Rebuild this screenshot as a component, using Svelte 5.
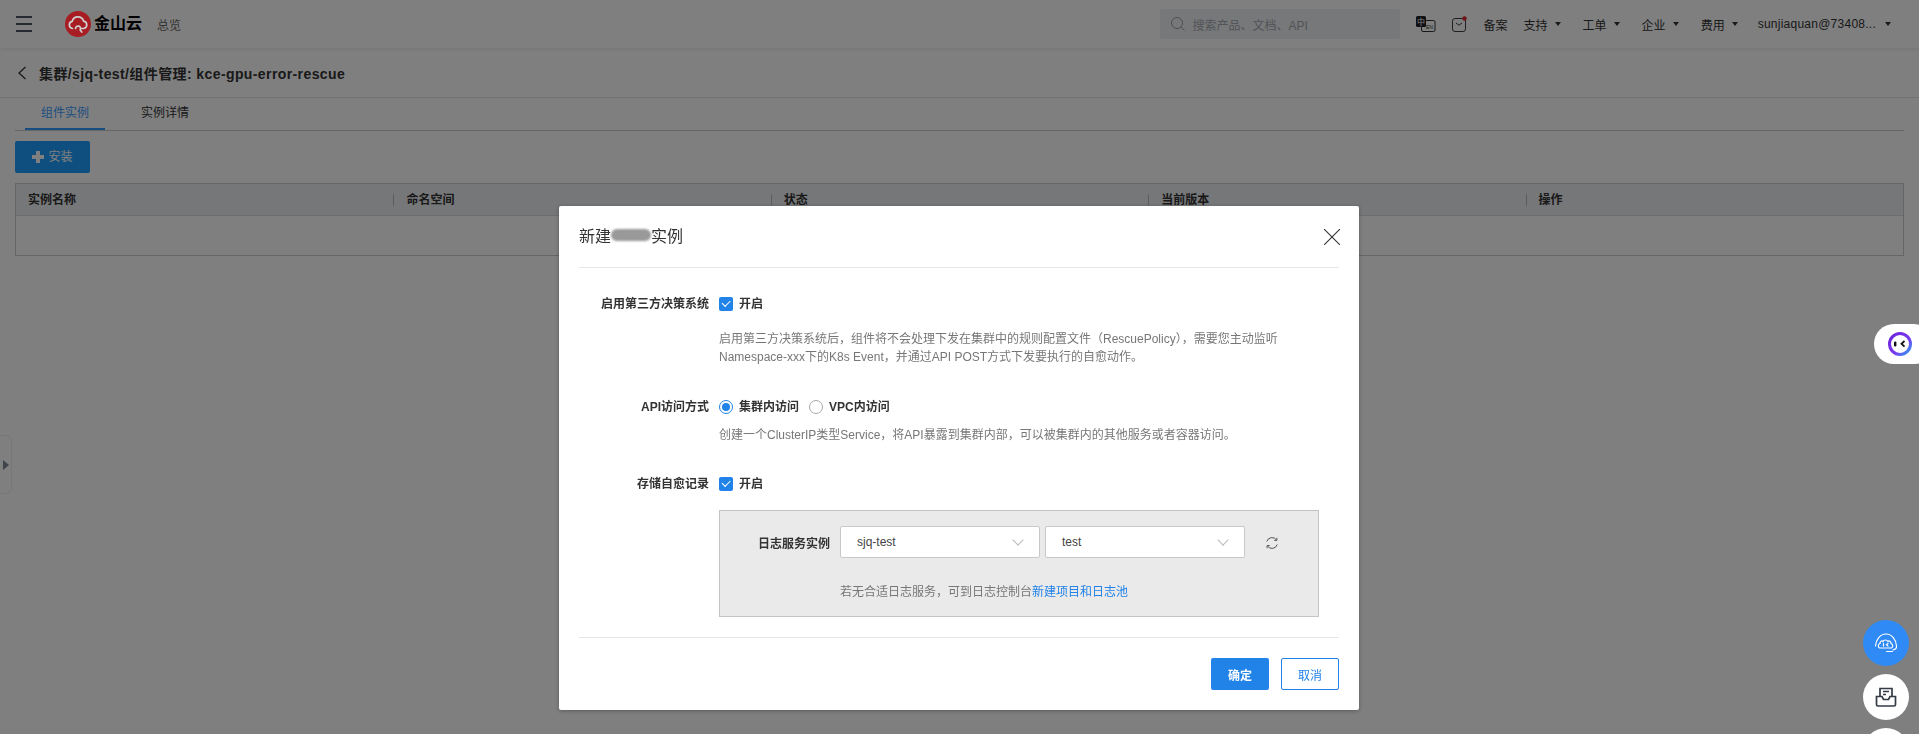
<script lang="ts">
  const columns = ['实例名称', '命名空间', '状态', '当前版本', '操作'];
  const navItems = ['支持', '工单', '企业', '费用'];
</script>

<div class="page">
  <header class="topbar">
    <div class="menu-icon"><span></span><span></span><span></span></div>
    <svg class="logo" viewBox="0 0 26 26" width="26" height="26">
      <circle cx="13" cy="13" r="13" fill="#a81d23" />
      <path d="M7.500 17.500a3.600 3.600 0 0 1-.3-7.100 5.900 5.900 0 0 1 11.400-.2 3.700 3.700 0 0 1 .1 7.300h-3.200M10.600 17.500a2.500 2.500 0 1 1 4.600 1.400l1.600 2.100" fill="none" stroke="#cfcfcf" stroke-width="1.700" stroke-linecap="round" />
    </svg>
    <span class="logo-text">金山云</span>
    <span class="overview">总览</span>
    <div class="search">
      <svg viewBox="0 0 16 16" width="16" height="16" fill="none" stroke="#9a9ea4" stroke-width="1"><circle cx="7" cy="7" r="5.500" /><path d="M11 11l3.500 3.500" /></svg>
      <span>搜索产品、文档、API</span>
    </div>
    <svg class="lang" viewBox="0 0 20 16" width="20" height="16">
      <rect x="5.500" y="4.500" width="13.500" height="11" rx="1.500" fill="#fff" stroke="#333" />
      <rect x="0" y="0" width="10" height="11" rx="1.500" fill="#1d2026" />
      <text x="1" y="8.500" font-size="8" fill="#fff">中</text>
      <text x="10" y="13" font-size="5" fill="#333">EN</text>
    </svg>
    <svg class="msg" viewBox="0 0 16 16" width="16" height="16" fill="none" stroke="#3a3f46">
      <rect x="0.500" y="2.500" width="13" height="13" rx="2.500" />
      <path d="M4 7l3 2.200 3-2.200" />
      <circle cx="12.500" cy="2.500" r="2.200" fill="#e0242c" stroke="none" />
    </svg>
    <span class="nav-item record">备案</span>
    {#each navItems as item}
      <span class="nav-item">{item}<i class="caret"></i></span>
    {/each}
    <span class="nav-item user">sunjiaquan@73408...<i class="caret"></i></span>
  </header>

  <div class="title-row">
    <svg viewBox="0 0 10 16" width="10" height="16" fill="none" stroke="#333" stroke-width="1.300"><path d="M8.500 2L2 8l6.500 6" /></svg>
    <h1>集群/sjq-test/组件管理: kce-gpu-error-rescue</h1>
  </div>

  <div class="tabs">
    <span class="tab active">组件实例</span>
    <span class="tab">实例详情</span>
  </div>

  <div class="content">
    <button type="button" class="install"><i class="plus"></i>安装</button>
    <div class="table">
      <div class="thead">
        {#each columns as col}
          <div class="th">{col}</div>
        {/each}
      </div>
      <div class="tbody"></div>
    </div>
  </div>

  <div class="side-toggle"><i></i></div>
</div>

<div class="mask"></div>

<div class="assist">
  <svg viewBox="0 0 24 24" width="24" height="24">
    <defs>
      <linearGradient id="ring" x1="0" y1="0" x2="1" y2="1">
        <stop offset="0" stop-color="#6a22d8" />
        <stop offset="0.6" stop-color="#7b3cf0" />
        <stop offset="1" stop-color="#2aa4ee" />
      </linearGradient>
    </defs>
    <circle cx="12" cy="12" r="10.500" fill="none" stroke="url(#ring)" stroke-width="3" />
    <rect x="6" y="9.500" width="2.400" height="5" rx="1" fill="#111" />
    <path d="M16.500 9l-3 2.800 3 2.800" fill="none" stroke="#111" stroke-width="1.800" />
  </svg>
</div>

<div class="float-btn blue">
  <svg viewBox="0 0 24 20" width="24" height="20" fill="none" stroke="#fff" stroke-width="1.200" stroke-linecap="round">
    <path d="M1.500 13C2 6.500 6 1 12 1s10 5.500 10.500 12c.2 2-1.200 3.500-3.500 4" />
    <path d="M5.500 15c-1.800-1-1.500-4.200.5-4.500-.2-2.200 2-3.200 3-2 .8-2 4-2 5 0 1.200-1.200 3.200-.2 3 2 2 .3 2.300 3.500.5 4.500z" />
    <path d="M9.500 10.500v2.500M14 10.500l-1.500 1.300 1.500 1.300" />
    <path d="M12.500 18.500h6" />
  </svg>
</div>
<div class="float-btn white inbox">
  <svg viewBox="0 0 24 24" width="24" height="24" fill="none" stroke="#333b47" stroke-width="1.700">
    <path d="M6 11V3.500h12V11" />
    <path d="M9 6.500h6M9 9.500h3" />
    <path d="M2.500 11.500h5.500l1.500 3h5l1.500-3h5.500v8a1.500 1.500 0 0 1-1.500 1.500H4a1.500 1.500 0 0 1-1.500-1.500z" />
  </svg>
</div>
<div class="float-btn white peek"></div>

<div class="modal">
  <div class="modal-head">
    <h2>新建<span class="blur"></span>实例</h2>
    <svg class="close" viewBox="0 0 16 16" width="16" height="16" fill="none" stroke="#333" stroke-width="1.100"><path d="M0 0l16 16M16 0L0 16" /></svg>
  </div>

  <div class="modal-body">
    <div class="row row-one">
      <div class="label">启用第三方决策系统</div>
      <div class="control">
        <span class="opt"><i class="check"></i>开启</span>
      </div>
    </div>
    <p class="desc d-one">
      启用第三方决策系统后，组件将不会处理下发在集群中的规则配置文件（RescuePolicy），需要您主动监听<br />
      Namespace-xxx下的K8s Event，并通过API POST方式下发要执行的自愈动作。
    </p>

    <div class="row row-two">
      <div class="label">API访问方式</div>
      <div class="control">
        <span class="opt"><i class="radio on"></i>集群内访问</span>
        <span class="opt"><i class="radio"></i>VPC内访问</span>
      </div>
    </div>
    <p class="desc d-two">创建一个ClusterIP类型Service，将API暴露到集群内部，可以被集群内的其他服务或者容器访问。</p>

    <div class="row row-three">
      <div class="label">存储自愈记录</div>
      <div class="control">
        <span class="opt"><i class="check"></i>开启</span>
      </div>
    </div>

    <div class="log-box">
      <div class="log-row">
        <div class="log-label">日志服务实例</div>
        <div class="select first">sjq-test<i class="chev"></i></div>
        <div class="select">test<i class="chev"></i></div>
        <svg class="refresh" viewBox="0 0 14 14" width="14" height="14" fill="none" stroke="#555" stroke-width="1">
          <path d="M1.800 5.500A5.400 5.400 0 0 1 11.500 4M12.200 8.500A5.400 5.400 0 0 1 2.500 10" />
          <path d="M11.900 1.800v2.600H9.300M2.100 12.200V9.600h2.600" />
        </svg>
      </div>
      <div class="hint">若无合适日志服务，可到日志控制台<span class="link">新建项目和日志池</span></div>
    </div>
  </div>

  <div class="modal-foot">
    <button type="button" class="btn primary">确定</button>
    <button type="button" class="btn ghost">取消</button>
  </div>
</div>

<style>
  :global(body) {
    margin: 0;
    overflow: hidden;
    background: #fff;
    font-family: "Liberation Sans", "Noto Sans CJK SC", sans-serif;
    font-size: 12px;
    color: #333;
  }

  .page {
    width: 1919px;
    height: 734px;
    overflow: hidden;
    background: #fff;
  }

  .topbar {
    height: 48px;
    display: flex;
    align-items: center;
    background: #fff;
    box-shadow: 0 1px 4px rgba(0, 0, 0, 0.1);
    padding: 0 28px 0 16px;
    box-sizing: border-box;
  }

  .menu-icon {
    width: 16px;
    display: flex;
    flex-direction: column;
    gap: 5px;
  }

  .menu-icon span {
    height: 2px;
    background: #4f5561;
  }

  /* the logo keeps more colour under the mask than plain 50% black would give */
  .logo {
    margin-left: 33px;
    position: relative;
    z-index: 2;
  }

  .logo-text {
    margin-left: 3px;
    font-size: 16px;
    line-height: 24px;
    font-weight: 700;
    color: #000;
    width: 48px;
    white-space: nowrap;
  }

  .overview {
    margin-left: 15px;
    color: #666;
  }

  .search {
    margin-left: auto;
    width: 240px;
    height: 30px;
    border-radius: 3px;
    background: #eef0f3;
    display: flex;
    align-items: center;
    gap: 7px;
    padding-left: 10px;
    box-sizing: border-box;
    color: #a4a8ae;
  }

  .search svg {
    flex: none;
  }

  .lang,
  .msg {
    margin-left: 16px;
    flex: none;
  }

  .nav-item {
    display: inline-flex;
    align-items: center;
    margin-left: 22px;
    white-space: nowrap;
    color: #333;
    flex: none;
  }

  .nav-item.record {
    margin: 0 -6px 0 16px;
  }

  .nav-item.user {
    margin-left: 20px;
    letter-spacing: 0.250px;
  }

  .caret {
    display: inline-block;
    margin-left: 7px;
    border-top: 4px solid #333;
    border-left: 3.500px solid transparent;
    border-right: 3.500px solid transparent;
  }

  .nav-item.user .caret {
    margin-left: 9px;
  }

  .title-row {
    height: 49px;
    display: flex;
    align-items: center;
    padding-left: 17px;
    gap: 12px;
    border-bottom: 1px solid #e4e4e4;
  }

  h1 {
    margin: 0;
    font-size: 14px;
    font-weight: 700;
    color: #333;
    letter-spacing: 0.400px;
  }

  .tabs {
    height: 32px;
    margin: 0 15px;
    padding-left: 10px;
    display: flex;
    border-bottom: 1px solid #ccc;
  }

  .tab {
    width: 80px;
    height: 32px;
    text-align: center;
    line-height: 30px;
    margin-right: 20px;
    box-sizing: border-box;
  }

  .tab.active {
    color: #389dff;
    border-bottom: 2px solid #2f9cff;
  }

  .content {
    padding: 10px 15px 0;
  }

  .install {
    width: 75px;
    height: 32px;
    border: 0;
    border-radius: 2px;
    background: #1f9eff;
    color: #fff;
    font: inherit;
    line-height: 30px;
    display: flex;
    align-items: center;
    justify-content: center;
    padding: 0 0 1px;
    gap: 4px;
  }

  .plus {
    width: 12px;
    height: 12px;
    background:
      linear-gradient(#fff, #fff) center / 12px 4px no-repeat,
      linear-gradient(#fff, #fff) center / 4px 12px no-repeat;
  }

  .table {
    margin-top: 10px;
    height: 73px;
    width: 1889px;
    border: 1px solid #ccc;
    box-sizing: border-box;
  }

  .thead {
    height: 31px;
    display: grid;
    grid-template-columns: repeat(5, 1fr);
    background: #edeff2;
    border-bottom: 1px solid #ddd;
    font-weight: 700;
    align-items: center;
  }

  .th {
    padding-left: 12px;
    height: 12px;
    line-height: 12px;
    border-left: 1px solid #bbb;
  }

  .th:first-child {
    border-left: 0;
  }

  .side-toggle {
    position: absolute;
    left: 0;
    top: 435px;
    width: 12px;
    height: 59px;
    box-sizing: border-box;
    border: 1px solid #efefef;
    border-left: 0;
    border-radius: 0 6px 6px 0;
    display: flex;
    align-items: center;
    padding-left: 3px;
  }

  .side-toggle i {
    border-top: 5px solid transparent;
    border-bottom: 5px solid transparent;
    border-left: 6px solid #7f8794;
  }

  .mask {
    position: fixed;
    inset: 0;
    z-index: 1;
    background: rgba(0, 0, 0, 0.5);
  }

  .assist {
    position: fixed;
    z-index: 3;
    left: 1874px;
    top: 324px;
    width: 60px;
    height: 40px;
    border-radius: 20px;
    background: #fff;
    display: flex;
    align-items: center;
    padding-left: 14px;
    box-sizing: border-box;
  }

  .float-btn {
    position: fixed;
    z-index: 3;
    left: 1863px;
    width: 46px;
    height: 46px;
    border-radius: 50%;
    display: flex;
    align-items: center;
    justify-content: center;
  }

  .float-btn.blue {
    top: 620px;
    background: #2f8af5;
  }

  .float-btn.white {
    background: #fff;
  }

  .inbox {
    top: 674px;
  }

  .peek {
    top: 728px;
  }

  .modal {
    position: fixed;
    z-index: 3;
    left: 559px;
    top: 206px;
    width: 800px;
    height: 504px;
    background: #fff;
    border-radius: 2px;
    box-shadow: 0 1px 4px rgba(0, 0, 0, 0.3);
    padding: 0 20px;
    box-sizing: border-box;
    display: flex;
    flex-direction: column;
  }

  .modal-head {
    height: 61px;
    display: flex;
    align-items: center;
    justify-content: space-between;
    border-bottom: 1px solid #e6e6e6;
    flex: none;
  }

  h2 {
    margin: 0 0 3px;
    font-size: 16px;
    font-weight: 400;
    color: #333;
    display: flex;
    align-items: center;
  }

  .blur {
    display: block;
    width: 40px;
    height: 12px;
    border-radius: 6px;
    background: #999;
    filter: blur(1px);
  }

  .close {
    margin: 0 -1px 0 0;
  }

  .modal-body {
    flex: 1;
  }

  .row {
    display: flex;
    align-items: center;
    height: 16px;
    line-height: 16px;
  }

  .row-one {
    margin-top: 28px;
  }

  .row-two {
    margin-top: 33px;
  }

  .row-three {
    margin-top: 32px;
  }

  .label {
    width: 130px;
    text-align: right;
    font-weight: 700;
    color: #333;
    white-space: nowrap;
  }

  .control {
    margin-left: 10px;
    display: flex;
    align-items: center;
    gap: 10px;
  }

  .opt {
    display: inline-flex;
    align-items: center;
    gap: 6px;
    font-weight: 700;
    color: #333;
  }

  .check {
    width: 14px;
    height: 14px;
    border-radius: 2px;
    background: #2182e7;
    position: relative;
  }

  .check::after {
    content: "";
    position: absolute;
    left: 3px;
    top: 2.500px;
    width: 7px;
    height: 3.500px;
    border-left: 1px solid #fff;
    border-bottom: 1px solid #fff;
    transform: rotate(-45deg);
  }

  .radio {
    width: 14px;
    height: 14px;
    border-radius: 50%;
    border: 1px solid #aaa;
    box-sizing: border-box;
    position: relative;
    background: #fff;
  }

  .radio.on {
    border-color: #2182e7;
  }

  .radio.on::after {
    content: "";
    position: absolute;
    inset: 2px;
    border-radius: 50%;
    background: #2182e7;
  }

  .desc {
    margin: 0 0 0 140px;
    color: #777;
    line-height: 18px;
    white-space: nowrap;
  }

  .d-one {
    margin-top: 18px;
  }

  .d-two {
    margin-top: 11px;
  }

  .log-box {
    margin: 18px 0 0 140px;
    width: 600px;
    height: 107px;
    box-sizing: border-box;
    border: 1px solid #c4c4c4;
    background: #eaeaea;
    padding-top: 15px;
  }

  .log-row {
    display: flex;
    align-items: center;
    height: 32px;
  }

  .log-label {
    width: 110px;
    text-align: right;
    font-weight: 700;
    color: #333;
    margin-right: 10px;
    flex: none;
  }

  .select {
    width: 200px;
    height: 32px;
    box-sizing: border-box;
    border: 1px solid #c8c8c8;
    border-radius: 2px;
    background: #fff;
    padding-left: 16px;
    line-height: 30px;
    color: #444;
    position: relative;
    flex: none;
  }

  .select.first {
    margin-right: 5px;
  }

  .chev {
    position: absolute;
    right: 17px;
    top: 9px;
    width: 7px;
    height: 7px;
    border-right: 1px solid #bbb;
    border-bottom: 1px solid #bbb;
    transform: rotate(45deg);
  }

  .refresh {
    margin-left: 20px;
    margin-top: 2px;
    flex: none;
  }

  .hint {
    margin: 25px 0 0 120px;
    line-height: 18px;
    color: #777;
  }

  .link {
    color: #2182e7;
  }

  .modal-foot {
    flex: none;
    height: 73px;
    box-sizing: border-box;
    border-top: 1px solid #e6e6e6;
    display: flex;
    justify-content: flex-end;
    gap: 12px;
    padding-top: 20px;
  }

  .btn {
    width: 58px;
    height: 32px;
    box-sizing: border-box;
    border-radius: 2px;
    font: inherit;
    font-weight: 700;
    padding: 0;
  }

  .btn.primary {
    border: 0;
    background: #2182e7;
    color: #fff;
  }

  .btn.ghost {
    border: 1px solid #2182e7;
    background: #fff;
    color: #2182e7;
    font-weight: 400;
  }
</style>
